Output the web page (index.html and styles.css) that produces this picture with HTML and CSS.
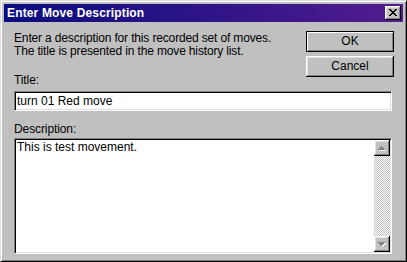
FILE: index.html
```html
<!DOCTYPE html>
<html>
<head>
<meta charset="utf-8">
<link rel="stylesheet" href="styles.css">
</head>
<body>
<div class="window">
  <div class="titlebar">
    <span class="title">Enter Move Description</span>
    <div class="close">
      <svg width="16" height="14" viewBox="0 0 16 14" shape-rendering="crispEdges">
        <g transform="translate(4,3)" fill="#000">
          <path d="M0 0h2v1h-2zM6 0h2v1h-2zM1 1h2v1h-2zM5 1h2v1h-2zM2 2h4v1h-4zM3 3h2v1h-2zM2 4h4v1h-4zM1 5h2v1h-2zM5 5h2v1h-2zM0 6h2v1h-2zM6 6h2v1h-2z"/>
        </g>
      </svg>
    </div>
  </div>
  <div class="body">
    <div class="top">
      <div class="left">
        <p class="intro">Enter a description for this recorded set of moves.<br>The title is presented in the move history list.</p>
        <div class="label title-label">Title:</div>
      </div>
      <div class="buttons">
        <div class="btn default">OK</div>
        <div class="btn">Cancel</div>
      </div>
    </div>
    <div class="field">turn 01 Red move</div>
    <div class="label desc-label">Description:</div>
    <div class="memo">
      <div class="memo-text">This is test movement.</div>
      <div class="scrollbar">
        <div class="sbtn">
          <svg width="16" height="16" viewBox="0 0 16 16" shape-rendering="crispEdges">
            <path fill="#fff" d="M8 7h1v1h-1zM7 8h3v1h-3zM6 9h5v1h-5zM5 10h7v1h-7z"/>
            <path fill="#808080" d="M7 6h1v1h-1zM6 7h3v1h-3zM5 8h5v1h-5zM4 9h7v1h-7z"/>
          </svg>
        </div>
        <div class="track"></div>
        <div class="sbtn">
          <svg width="16" height="16" viewBox="0 0 16 16" shape-rendering="crispEdges">
            <path fill="#fff" d="M5 7h7v1h-7zM6 8h5v1h-5zM7 9h3v1h-3zM8 10h1v1h-1z"/>
            <path fill="#808080" d="M4 6h7v1h-7zM5 7h5v1h-5zM6 8h3v1h-3zM7 9h1v1h-1z"/>
          </svg>
        </div>
      </div>
    </div>
  </div>
</div>
</body>
</html>
```

FILE: styles.css
```css
html, body {
  margin: 0;
  padding: 0;
}
body {
  background: #c0c0c0;
  font-family: "Liberation Sans", Arial, sans-serif;
  font-size: 12px;
  color: #000;
}
.window {
  box-sizing: border-box;
  width: 407px;
  height: 262px;
  background: #c0c0c0;
  border: 1px solid;
  border-color: #dfdfdf #000 #000 #dfdfdf;
  box-shadow: inset 1px 1px #fff, inset -1px -1px #808080;
  padding: 3px;
  display: flex;
  flex-direction: column;
  overflow: hidden;
}
.titlebar {
  height: 18px;
  flex: none;
  display: flex;
  align-items: center;
  justify-content: space-between;
  background: linear-gradient(90deg, #0a0c80, #521c8e);
  padding: 0 2px 0 3px;
  color: #fff;
  font-weight: bold;
  font-size: 12px;
  letter-spacing: 0.15px;
}
.close {
  width: 16px;
  height: 14px;
  background: #c0c0c0;
  box-shadow: inset -1px -1px #000, inset 1px 1px #fff, inset -2px -2px #808080, inset 2px 2px #dfdfdf;
}
.close svg, .sbtn svg {
  display: block;
}
.body {
  flex: 1;
  padding: 10px 9px 0 10px;
}
.top {
  display: flex;
  justify-content: space-between;
}
.intro {
  margin: 0;
  line-height: 13px;
  letter-spacing: -0.15px;
}
.label {
  line-height: 13px;
  letter-spacing: -0.1px;
}
.title-label {
  margin-top: 16px;
}
.buttons {
  width: 88px;
  margin-top: -1px;
  display: flex;
  flex-direction: column;
  gap: 4px;
}
.btn {
  box-sizing: border-box;
  height: 21px;
  background: #c0c0c0;
  box-shadow: inset -1px -1px #000, inset 1px 1px #fff, inset -2px -2px #808080, inset 2px 2px #dfdfdf;
  text-align: center;
  line-height: 21px;
}
.btn.default {
  border: 1px solid #000;
  box-shadow: inset 1px 1px #fff, inset -1px -1px #808080;
  line-height: 19px;
}
.field {
  box-sizing: border-box;
  margin-top: 4px;
  margin-right: 2px;
  height: 20px;
  background: #fff;
  border: 1px solid;
  border-color: #808080 #fff #fff #808080;
  box-shadow: inset 1px 1px #000, inset -1px -1px #dfdfdf;
  padding: 1px 2px 0 2px;
  line-height: 17px;
  white-space: nowrap;
  overflow: hidden;
}
.desc-label {
  margin-top: 12px;
}
.memo {
  box-sizing: border-box;
  margin-top: 2px;
  margin-right: 2px;
  height: 116px;
  background: #fff;
  border: 1px solid;
  border-color: #808080 #fff #fff #808080;
  box-shadow: inset 1px 1px #000, inset -1px -1px #dfdfdf;
  padding: 1px;
  display: flex;
}
.memo-text {
  flex: 1;
  padding: 1px 2px 0 1px;
  line-height: 13px;
}
.scrollbar {
  width: 16px;
  display: flex;
  flex-direction: column;
}
.sbtn {
  width: 16px;
  height: 16px;
  flex: none;
  background: #c0c0c0;
  box-shadow: inset -1px -1px #000, inset 1px 1px #fff, inset -2px -2px #808080, inset 2px 2px #dfdfdf;
}
.track {
  flex: 1;
  background: repeating-conic-gradient(#fff 0 25%, #c0c0c0 0 50%) 0 0 / 2px 2px;
}
```
